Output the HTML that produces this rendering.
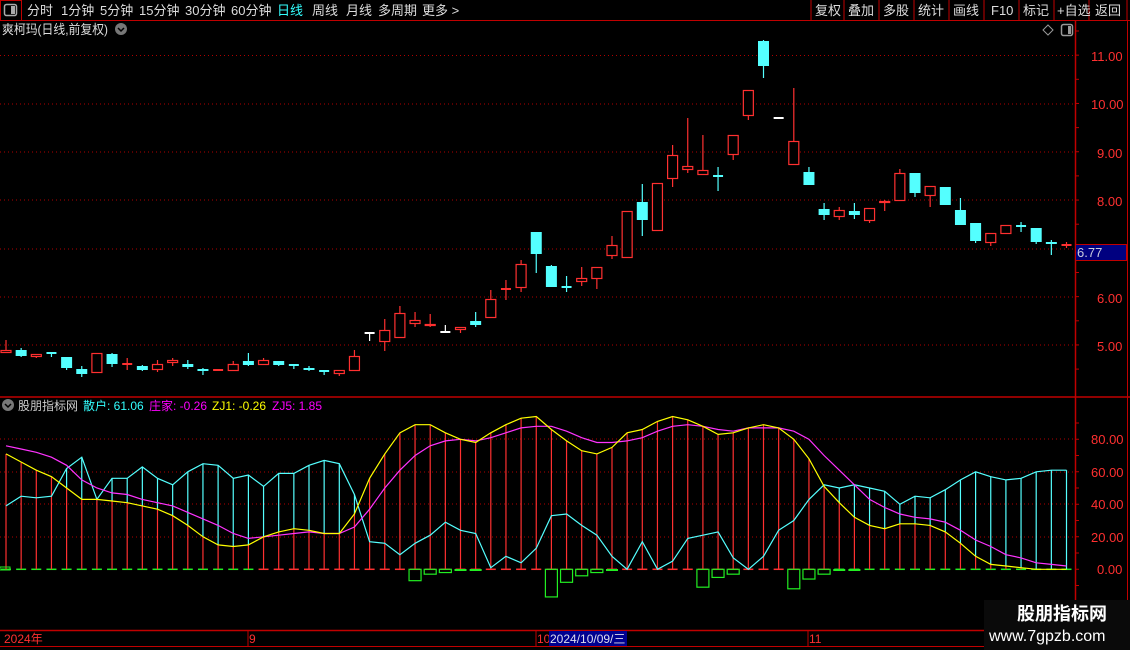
<!DOCTYPE html>
<html><head><meta charset="utf-8">
<style>
html,body{margin:0;padding:0;background:#000;width:1130px;height:650px;overflow:hidden;font-family:"Liberation Sans","Noto Sans CJK SC",sans-serif;}
svg{display:block}
</style></head><body>
<svg id="s" width="1130" height="650" xmlns="http://www.w3.org/2000/svg" font-family="Liberation Sans, Noto Sans CJK SC, sans-serif">
<rect width="1130" height="650" fill="#000"/>
<!-- top bar -->
<line x1="0" y1="20.5" x2="1130" y2="20.5" stroke="#c00000"/>
<rect x="0.5" y="0.5" width="21" height="20" fill="none" stroke="#c00000"/>
<rect x="4.5" y="4.5" width="12" height="11" rx="2" fill="none" stroke="#aaa" stroke-width="1.5"/>
<rect x="11" y="6" width="4" height="8" fill="#aaa"/>
<g font-size="13" fill="#ddd">
<text x="27" y="15">分时</text><text x="61" y="15">1分钟</text><text x="100" y="15">5分钟</text><text x="139" y="15">15分钟</text><text x="185" y="15">30分钟</text><text x="231" y="15">60分钟</text>
<text x="277" y="15" fill="#3ff">日线</text><text x="312" y="15">周线</text><text x="346" y="15">月线</text><text x="378" y="15">多周期</text><text x="422" y="15">更多 &gt;</text>
</g>
<g stroke="#c00000"><line x1="811" y1="0" x2="811" y2="20"/><line x1="844" y1="0" x2="844" y2="20"/><line x1="879" y1="0" x2="879" y2="20"/><line x1="914" y1="0" x2="914" y2="20"/><line x1="949" y1="0" x2="949" y2="20"/><line x1="984" y1="0" x2="984" y2="20"/><line x1="1019" y1="0" x2="1019" y2="20"/><line x1="1054" y1="0" x2="1054" y2="20"/><line x1="1089" y1="0" x2="1089" y2="20"/><line x1="1127" y1="0" x2="1127" y2="20"/></g>
<g font-size="13" fill="#ddd"><text x="815" y="15">复权</text><text x="848" y="15">叠加</text><text x="883" y="15">多股</text><text x="918" y="15">统计</text><text x="953" y="15">画线</text><text x="991" y="15">F10</text><text x="1023" y="15">标记</text><text x="1057" y="15">+自选</text><text x="1095" y="15">返回</text></g>
<!-- title -->
<text x="2" y="34" font-size="13" fill="#ddd" textLength="106" lengthAdjust="spacingAndGlyphs">爽柯玛(日线,前复权)</text>
<circle cx="121" cy="29" r="6" fill="#777"/><path d="M118 28 l3 3 l3 -3" stroke="#000" stroke-width="1.5" fill="none"/>
<path d="M1048 25 l5 5 l-5 5 l-5 -5z" fill="none" stroke="#999"/>
<rect x="1061.5" y="24.5" width="11" height="11" rx="2" fill="none" stroke="#999" stroke-width="1.5"/><rect x="1068" y="26" width="3" height="8" fill="#999"/>
<!-- axes -->
<line x1="1075.5" y1="20" x2="1075.5" y2="630" stroke="#c00000" stroke-width="1.5"/>
<line x1="1127.5" y1="20" x2="1127.5" y2="630" stroke="#c00000"/>
<line x1="0" y1="397" x2="1130" y2="397" stroke="#c00000" stroke-width="1.5"/>
<g id="grid"></g>
<g font-size="13" fill="#ff3030">
<text x="1091" y="61">11.00</text><text x="1091" y="109">10.00</text><text x="1097" y="158">9.00</text><text x="1097" y="206">8.00</text><text x="1097" y="303">6.00</text><text x="1097" y="351">5.00</text>
<text x="1091" y="444">80.00</text><text x="1091" y="477">60.00</text><text x="1091" y="509">40.00</text><text x="1091" y="542">20.00</text><text x="1097" y="574">0.00</text>
</g>
<rect x="1075.5" y="244.5" width="51" height="16" fill="#000080" stroke="#c00000"/>
<text x="1077" y="257" font-size="13" fill="#ccd">6.77</text>
<g id="chart"></g>
<!-- indicator header -->
<circle cx="8" cy="405" r="6" fill="#777"/><path d="M5 404 l3 3 l3 -3" stroke="#000" stroke-width="1.5" fill="none"/>
<g font-size="12"><text x="18" y="410" fill="#ccc">股朋指标网</text><text x="83" y="410" fill="#3ff">散户: 61.06</text><text x="149" y="410" fill="#f0f">庄家: -0.26</text><text x="212" y="410" fill="#ff0">ZJ1: -0.26</text><text x="272" y="410" fill="#f0f">ZJ5: 1.85</text></g>
<!-- date axis -->
<line x1="0" y1="630.5" x2="1130" y2="630.5" stroke="#c00000" stroke-width="1.5"/>
<line x1="0" y1="646.5" x2="1130" y2="646.5" stroke="#c00000"/>
<g stroke="#c00000"><line x1="248" y1="631" x2="248" y2="646"/><line x1="536" y1="631" x2="536" y2="646"/><line x1="808" y1="631" x2="808" y2="646"/></g>
<g font-size="12" fill="#ff3030"><text x="4" y="643">2024年</text><text x="249" y="643">9</text><text x="537" y="643">10</text><text x="809" y="643">11</text></g>
<rect x="549" y="631" width="78" height="15" fill="#000090"/>
<text x="550" y="643" font-size="12" fill="#dde">2024/10/09/三</text>
<!-- watermark -->
<rect x="984" y="600" width="146" height="50" fill="#0a0a0a"/>
<text x="1017" y="620" font-size="18" font-weight="bold" fill="#fff">股朋指标网</text>
<text x="989" y="641" font-size="16" fill="#fff">www.7gpzb.com</text>
</svg>
<script>
var NS="http://www.w3.org/2000/svg";
function el(p,t,a){var e=document.createElementNS(NS,t);for(var k in a)e.setAttribute(k,a[k]);p.appendChild(e);return e;}
var g=document.getElementById("chart"),gr=document.getElementById("grid");
[55.5,104,152,200,249,297,345,439,472,504,537].forEach(function(y){el(gr,"line",{x1:0,y1:y,x2:1075,y2:y,stroke:"#b00000","stroke-dasharray":"1 3"});});
for(var y=31;y<392;y+=24.15){el(gr,"line",{x1:1075,y1:y,x2:1079,y2:y,stroke:"#c00000"});}
for(var y=423;y<600;y+=16.25){el(gr,"line",{x1:1075,y1:y,x2:1079,y2:y,stroke:"#c00000"});}
var C=[["r",350,353,340,353],["c",350,356,348,357],["r",354,357,354,358],["c",353,354,352,357],["c",357,368,357,370],["c",369,374,366,377],["r",353,373,353,373],["c",354,364,353,367],["r",364,364,358,370],["c",366,370,365,371],["r",364,370,360,372],["r",360,363,358,366],["c",364,367,360,369],["c",369,371,368,375],["R",370,371,369,371],["r",364,371,361,371],["c",361,365,353,366],["r",360,365,358,365],["c",361,365,361,366],["c",365,365,364,369],["c",368,370,366,371],["c",371,371,370,375],["r",370,374,370,376],["r",356,371,350,371],["w",333,333,333,341],["r",330,342,319,351],["r",313,338,306,338],["r",320,324,312,327],["R",324,326,314,327],["w",332,332,325,332],["r",327,330,327,333],["c",321,325,312,327],["r",299,318,290,318],["R",289,290,280,300],["r",264,288,260,292],["c",232,254,232,273],["c",266,287,265,287],["c",287,287,276,292],["r",278,282,267,286],["r",267,279,267,289],["r",245,256,236,259],["r",211,258,211,258],["c",202,220,184,236],["r",183,231,183,231],["r",155,179,145,187],["r",166,170,118,173],["r",170,175,135,175],["c",176,176,167,191],["r",135,155,135,160],["r",90,116,90,120],["c",41,66,40,78],["w",118,118,118,118],["r",141,165,88,165],["c",172,185,167,185],["c",209,215,203,220],["r",210,217,207,220],["c",211,215,203,219],["r",208,221,208,223],["r",201,203,200,211],["r",173,201,169,201],["c",173,193,173,197],["r",186,196,186,207],["c",187,205,187,205],["c",210,225,198,225],["c",223,241,223,243],["r",233,243,233,246],["r",225,234,225,234],["c",226,226,222,232],["c",228,242,228,244],["c",242,244,240,255],["r",245,246,242,248]];
function X(i){return 6+i*15.15;}
C.forEach(function(c,i){var x=X(i),t=c[0],col=t=="c"?"#54ffff":(t=="w"?"#fff":"#ff3030");
 el(g,"line",{x1:x,y1:c[3],x2:x,y2:c[4],stroke:col,"stroke-width":1.2});
 var h=c[2]-c[1];
 if(h<2){el(g,"rect",{x:x-5,y:c[1]-1,width:10,height:2,fill:col});}
 else if(t=="c"){el(g,"rect",{x:x-5.5,y:c[1],width:11,height:h,fill:col});}
 else{el(g,"rect",{x:x-5,y:c[1]+0.5,width:10,height:h-1,fill:"#000",stroke:col,"stroke-width":1.2});}
});
var CY=[39,45,44,45,62,69,43,56,56,63,56,52,60,65,64,56,58,51,59,59,64,67,65,46,17,16,9,16,21,29,24,22,1,8,4,13,33,34,27,21,8,0,17,0,5,19,21,23,7,0,8,24,30,43,52,50,52,50,48,40,45,44,49,55,60,57,55,56,60,61,61];
var YL=[71,66,61,57,50,43,43,42,41,39,37,33,27,20,15,14,15,20,23,25,24,22,22,34,56,71,84,89,89,84,80,78,84,89,93,94,86,79,73,71,75,84,86,91,94,92,88,83,84,87,89,87,80,68,51,41,32,27,25,28,28,27,23,16,8,3,2,1,0,0,0];
var MG=[76,74,72,69,64,55,50,47,46,43,41,39,35,31,27,22,19,20,21,22,23,22,22,26,37,50,61,70,76,79,80,79,81,84,87,88,88,85,81,78,78,79,81,85,88,89,88,86,85,87,87,87,85,80,70,61,52,43,38,34,32,31,29,24,18,14,9,7,4,3,2];
var NEG={27:7,28:3,29:2,30:0.7,31:0.7,36:17,37:8,38:4,39:2,40:1,46:11,47:5,48:3,52:12,53:6,54:3,55:1,56:0.6};
function V(v){return 569.3-v*1.625;}
for(var i=0;i<71;i++){var x=X(i);
 var zc=(i<=16||i>=55)?"#22ee22":"#ff3030";
 el(g,"line",{x1:x-5,y1:569.3,x2:x+5,y2:569.3,stroke:zc,"stroke-width":1.5});
 el(g,"line",{x1:x,y1:569.3,x2:x,y2:V(YL[i]),stroke:"#ff3030","stroke-width":1.2});
 if(CY[i]>YL[i])el(g,"line",{x1:x,y1:V(YL[i]),x2:x,y2:V(CY[i]),stroke:"#54ffff","stroke-width":1.2});
 if(NEG[i]){var h=NEG[i]*1.625*1.0;if(h<3)el(g,"rect",{x:x-6,y:569,width:12,height:Math.max(h,2),fill:"#22ee22"});else el(g,"rect",{x:x-6,y:569.3,width:12,height:h,fill:"none",stroke:"#22ee22","stroke-width":1.2});}
}
function line(a,col){var d="";a.forEach(function(v,i){d+=(i?"L":"M")+X(i).toFixed(1)+" "+V(v).toFixed(1);});el(g,"path",{d:d,stroke:col,fill:"none","stroke-width":1.2});}
line(CY,"#54ffff");line(MG,"#ff33ff");line(YL,"#ffff00");
el(g,"rect",{x:0,y:567,width:10,height:3,fill:"none",stroke:"#22ee22"});
</script>
</body></html>
